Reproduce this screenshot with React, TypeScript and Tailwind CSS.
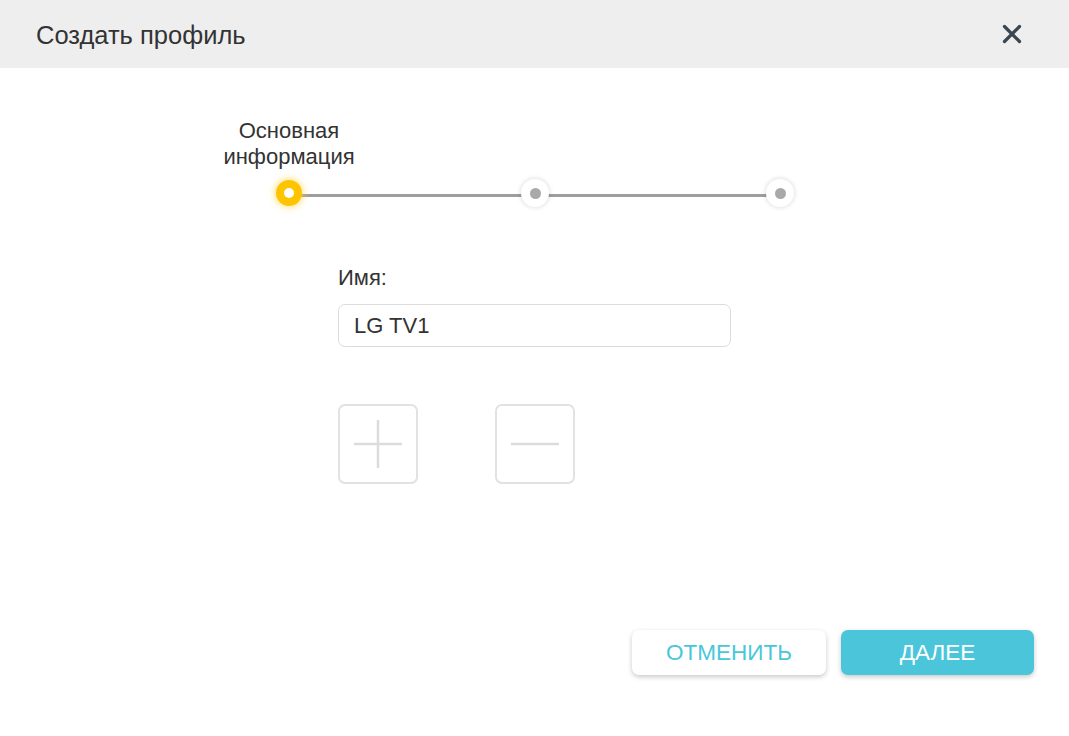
import { X } from 'lucide-react';

function StepDot({ active }: { active?: boolean }) {
  if (active) {
    return (
      <div className="w-[26px] h-[26px] rounded-full bg-[#ffc400] flex items-center justify-center shadow-[0_0_6px_2px_rgba(255,210,60,0.55)]">
        <div className="w-[10px] h-[10px] rounded-full bg-white"></div>
      </div>
    );
  }
  return (
    <div className="w-[28px] h-[28px] rounded-full bg-white flex items-center justify-center shadow-[0_0_4px_1px_rgba(0,0,0,0.12)]">
      <div className="w-[11px] h-[11px] rounded-full bg-[#a9a9a9]"></div>
    </div>
  );
}

export default function App() {
  return (
    <div className="w-[1069px] h-[736px] bg-white flex flex-col font-[Liberation_Sans,Arial,sans-serif] text-[#333]">
      {/* Header */}
      <div className="h-[68px] bg-[#eeeeee] flex items-center justify-between pl-[36px] pr-[42px]">
        <h1 className="text-[25.5px] text-[#333] mt-[2px]">Создать профиль</h1>
        <X className="w-[30px] h-[30px] text-[#3a4650]" strokeWidth={2.6} />
      </div>

      {/* Stepper */}
      <div className="relative h-[150px]">
        <div className="absolute left-[189px] top-[50px] w-[200px] text-center text-[22px] leading-[26px] text-[#333]">
          Основная<br />информация
        </div>
        <div className="absolute left-[289px] top-[126px] w-[491px] h-[3px] bg-[#9e9e9e]"></div>
        <div className="absolute left-[276px] top-[112px]">
          <StepDot active />
        </div>
        <div className="absolute left-[521px] top-[111px]">
          <StepDot />
        </div>
        <div className="absolute left-[766px] top-[111px]">
          <StepDot />
        </div>
      </div>

      {/* Form */}
      <div className="pl-[338px] pt-[48px]">
        <label className="block text-[22px] text-[#333] leading-[24px]">Имя:</label>
        <div className="mt-[14px] w-[393px] h-[43px] border border-[#dcdcdc] rounded-[7px] flex items-center px-[15px] text-[22px] text-[#333]">
          LG TV1
        </div>

        <div className="flex gap-[77px] mt-[57px]">
          <button className="w-[80px] h-[80px] border-2 border-[#e2e2e2] rounded-[7px] flex items-center justify-center">
            <svg width="50" height="50" viewBox="0 0 50 50">
              <path d="M1 25h48M25 1v48" stroke="#dcdcdc" strokeWidth="2.5" />
            </svg>
          </button>
          <button className="w-[80px] h-[80px] border-2 border-[#e2e2e2] rounded-[7px] flex items-center justify-center">
            <svg width="50" height="50" viewBox="0 0 50 50">
              <path d="M1 25h48" stroke="#dcdcdc" strokeWidth="2.5" />
            </svg>
          </button>
        </div>
      </div>

      {/* Footer buttons */}
      <div className="flex justify-end gap-[15px] pr-[35px] mt-auto mb-[61px]">
        <button className="w-[194px] h-[45px] rounded-[7px] bg-white text-[#4ac6da] text-[22.5px] shadow-[0_2px_5px_rgba(0,0,0,0.22)]">
          ОТМЕНИТЬ
        </button>
        <button className="w-[193px] h-[45px] rounded-[7px] bg-[#4bc5da] text-white text-[22.5px] shadow-[0_2px_5px_rgba(0,0,0,0.22)]">
          ДАЛЕЕ
        </button>
      </div>
    </div>
  );
}
